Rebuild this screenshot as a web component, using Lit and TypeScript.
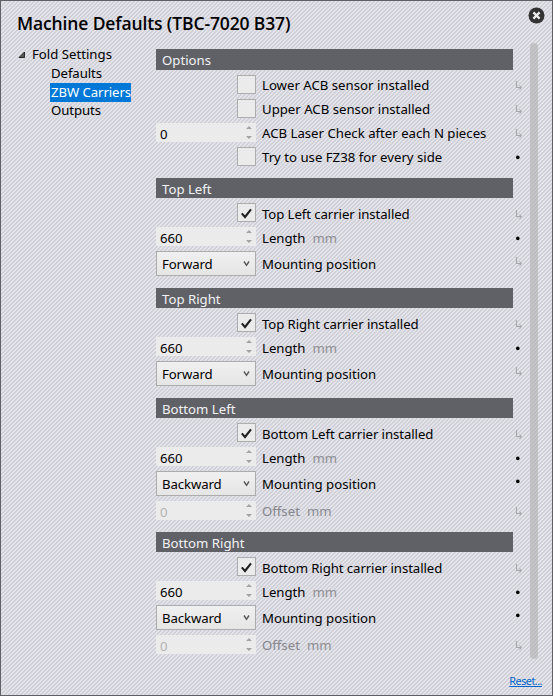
import { LitElement, html, svg, css, nothing } from "lit";
import { customElement } from "lit/decorators.js";

type Row = {
  kind: "check" | "spin" | "combo";
  label: string;
  value?: string;
  unit?: string;
  on?: boolean;
  disabled?: boolean;
  set?: boolean;
};
type Section = { title: string; rows: Row[] };

const carrier = (title: string, position: string, offset: boolean): Section => ({
  title,
  rows: [
    { kind: "check", label: `${title} carrier installed`, on: true },
    { kind: "spin", label: "Length", unit: "mm", value: "660", set: true },
    { kind: "combo", label: "Mounting position", value: position, set: offset },
    ...(offset
      ? [{ kind: "spin", label: "Offset", unit: "mm", value: "0", disabled: true } as Row]
      : []),
  ],
});

const SECTIONS: Section[] = [
  {
    title: "Options",
    rows: [
      { kind: "check", label: "Lower ACB sensor installed" },
      { kind: "check", label: "Upper ACB sensor installed" },
      { kind: "spin", label: "ACB Laser Check after each N pieces", value: "0" },
      { kind: "check", label: "Try to use FZ38 for every side", set: true },
    ],
  },
  carrier("Top Left", "Forward", false),
  carrier("Top Right", "Forward", false),
  carrier("Bottom Left", "Backward", true),
  carrier("Bottom Right", "Backward", true),
];

@customElement("app-root")
export class AppRoot extends LitElement {
  static styles = css`
    :host {
      display: block;
      position: relative;
      box-sizing: border-box;
      width: 553px;
      height: 696px;
      overflow: hidden;
      border: 1px solid #606167;
      font-family: "Noto Sans", "Open Sans", sans-serif;
      font-size: 13.2px;
      line-height: 19px;
      color: #000;
      white-space: nowrap;
      background: linear-gradient(135deg, #d0d0d9 25%, #e3e3e9 25% 50%, #d0d0d9 50% 75%, #e3e3e9 75%);
      background-size: 4px 4px;
    }
    svg { display: block; }
    .title {
      margin: 0;
      padding: 9px 0 0 16px;
      height: 38px;
      box-sizing: border-box;
      font-family: "Open Sans", "Noto Sans", sans-serif;
      font-size: 17.5px;
      line-height: 26px;
      font-weight: 600;
      letter-spacing: -0.13px;
    }
    .close { position: absolute; right: 7px; top: 6px; }
    .main { display: flex; height: 627px; }
    .tree { width: 155px; padding-top: 6px; box-sizing: border-box; }
    .node { display: flex; align-items: center; height: 19px; padding-left: 17px; }
    .node span { margin-left: 6px; }
    .leaf { height: 18.6px; line-height: 18.6px; padding-left: 49px; letter-spacing: -0.08px; }
    .leaf span { display: inline-block; padding: 0 0 0 1px; height: 19px; }
    .sel { background: #0078d7; color: #fff; }
    .form { width: 370px; padding-top: 10.2px; box-sizing: border-box; }
    .section { display: flex; flex-direction: column; gap: 5px; margin-bottom: 12px; }
    .head {
      width: 357px;
      height: 20.6px;
      line-height: 23px;
      background: #606167;
      color: #f2f2f5;
      padding-left: 6px;
      box-sizing: border-box;
    }
    .row { display: flex; height: 19px; align-items: center; }
    .row.combo { height: 24.4px; }
    .field { width: 100px; display: flex; justify-content: flex-end; flex: none; }
    .label { margin-left: 6px; padding-top: 2.4px; flex: 1; }
    .tight { letter-spacing: -0.08px; }
    .unit { margin-left: 7px; color: #8e8e94; }
    .off { color: #86868c; }
    .box {
      width: 19px;
      height: 19px;
      box-sizing: border-box;
      border: 1px solid #acacac;
      background: #ebebeb;
    }
    .number {
      width: 100px;
      height: 19px;
      padding: 0 4px;
      box-sizing: border-box;
      background: #ebebeb;
      display: flex;
      justify-content: space-between;
      line-height: 22.2px;
    }
    .number svg { margin-top: 3px; }
    .number.dim { color: #b4b4b4; }
    .select {
      width: 100px;
      height: 25px;
      line-height: 22.6px;
      padding: 1px 5px 0 5px;
      box-sizing: border-box;
      border: 1px solid #acacac;
      background: linear-gradient(#f0f0f0, #e5e5e5);
      display: flex;
      justify-content: space-between;
      letter-spacing: -0.1px;
    }
    .select svg { margin-top: 8px; }
    .mark { width: 13px; margin-top: 3.6px; flex: none; }
    .combo .mark { margin-top: -3px; }
    .track {
      width: 8px;
      height: 616px;
      margin: 4px 0 0 4px;
      border-radius: 4px;
      background: rgba(176, 176, 176, 0.6);
    }
    .foot { display: flex; justify-content: flex-end; padding: 7px 10px 0 0; }
    .link { font-size: 10.8px; line-height: 16px; color: #0066cc; text-decoration: underline; letter-spacing: -0.5px; }
  `;

  private control(r: Row) {
    if (r.kind === "check")
      return html`<div class="box">
        ${r.on
          ? html`<svg width="17" height="17"><path d="M3.8 9.4L7 13L13 5.4" fill="none" stroke="#212121" stroke-width="2.1" /></svg>`
          : nothing}
      </div>`;
    if (r.kind === "combo")
      return html`<div class="select">${r.value}
        <svg width="7" height="6"><path d="M1 0.5L3.5 4.3L6 0.5" fill="none" stroke="#55565a" stroke-width="1.4" /></svg>
      </div>`;
    return html`<div class="number ${r.disabled ? "dim" : ""}">${r.value}
      <svg width="6" height="13"><path d="M0 3L3 0L6 3ZM0 10L3 13L6 10Z" fill="#a3a3a3" /></svg>
    </div>`;
  }

  private mark(set?: boolean) {
    return html`<svg class="mark" width="13" height="10">
      ${set
        ? svg`<circle cx="4.8" cy="4.4" r="1.8" fill="#000" />`
        : svg`<path d="M3.5 0V6.5H8M6.5 4.5L8.3 6.5L6.5 8.7" fill="none" stroke="#a8a8ac" stroke-width="1.1" />`}
    </svg>`;
  }

  render() {
    return html`
      <h1 class="title">Machine Defaults (TBC-7020 B37)</h1>
      <svg class="close" width="17" height="17">
        <circle cx="8.5" cy="8.5" r="8" fill="#333" />
        <path d="M5.4 5.4L11.6 11.6M11.6 5.4L5.4 11.6" stroke="#eee" stroke-width="2.2" />
      </svg>
      <div class="main">
        <nav class="tree">
          <div class="node">
            <svg width="8" height="8"><path d="M6.5 1V6.5H1Z" fill="#595959" stroke="#262626" /></svg>
            <span>Fold Settings</span>
          </div>
          <div class="leaf"><span>Defaults</span></div>
          <div class="leaf"><span class="sel">ZBW Carriers</span></div>
          <div class="leaf"><span>Outputs</span></div>
        </nav>
        <div class="form">
          ${SECTIONS.map(
            (s) => html`<section class="section">
              <div class="head">${s.title}</div>
              ${s.rows.map(
                (r) => html`<div class="row ${r.kind}">
                  <div class="field">${this.control(r)}</div>
                  <div class="label ${r.disabled ? "off" : ""} ${r.on ? "tight" : ""}">${r.label}${r.unit
                    ? html`<span class="unit">${r.unit}</span>`
                    : nothing}</div>
                  ${this.mark(r.set)}
                </div>`
              )}
            </section>`
          )}
        </div>
        <div class="track"></div>
      </div>
      <div class="foot"><a class="link">Reset...</a></div>
    `;
  }
}
